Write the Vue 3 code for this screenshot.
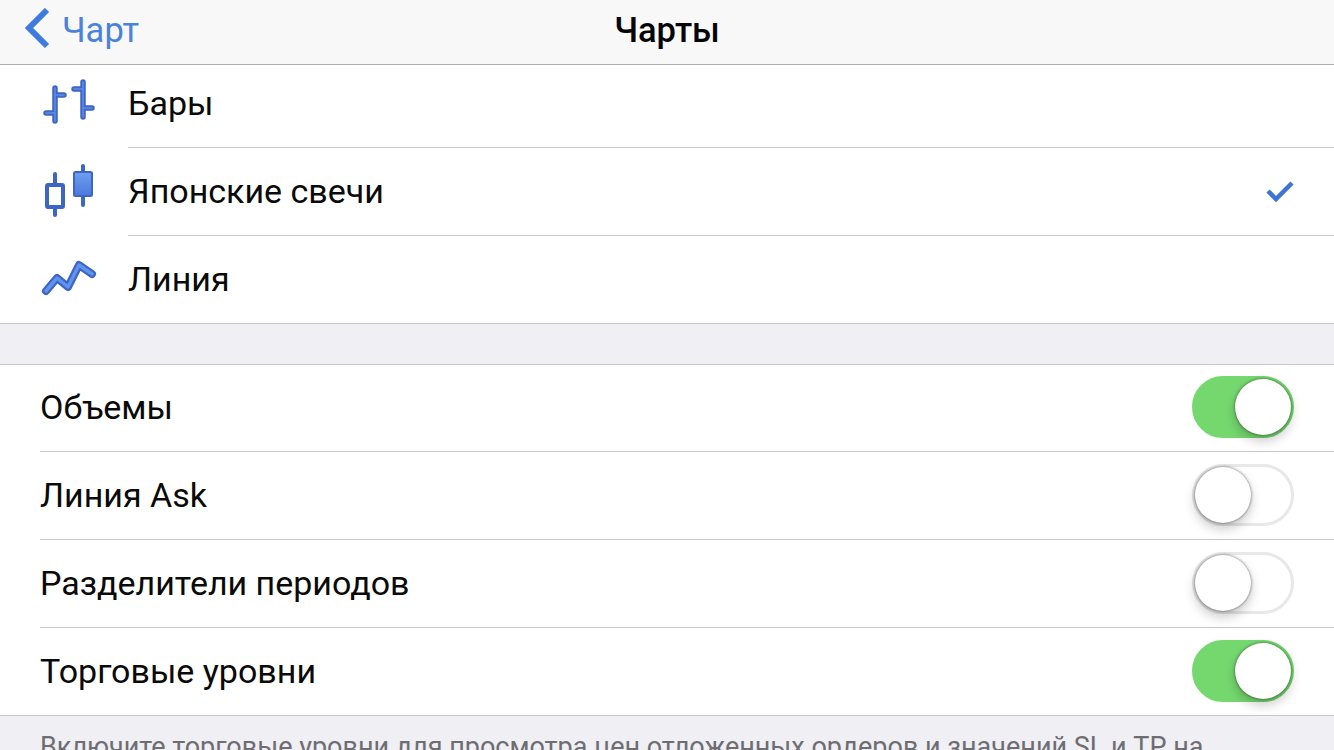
<script setup>
import { ref } from 'vue'

const chartTypes = ref([
  { id: 'bars', label: 'Бары', selected: false },
  { id: 'candles', label: 'Японские свечи', selected: true },
  { id: 'line', label: 'Линия', selected: false }
])

const options = ref([
  { label: 'Объемы', on: true },
  { label: 'Линия Ask', on: false },
  { label: 'Разделители периодов', on: false },
  { label: 'Торговые уровни', on: true }
])
</script>

<template>
  <div class="screen">
    <header class="navbar">
      <div class="back">
        <svg class="chevron" width="28" height="44" viewBox="0 0 28 44">
          <path d="M25 2 L7 20 L25 38" fill="none" stroke="#3e7be0" stroke-width="6" />
        </svg>
        <span>Чарт</span>
      </div>
      <div class="title">Чарты</div>
    </header>

    <!-- list is scrolled a little under the navbar -->
    <section class="group types">
      <div v-for="item in chartTypes" :key="item.id" class="type-row">
        <div class="type-icon">
          <svg v-if="item.id === 'bars'" width="60" height="60" viewBox="0 0 60 60">
            <g fill="none" stroke-linecap="round">
              <path stroke="#3f66c4" stroke-width="5.500" d="M15 14 V47 M15 21 H24 M6 39 H15 M43 8 V43 M34 15 H43 M43 34 H52" />
              <path stroke="#5f8dea" stroke-width="1.500" d="M15 14 V47 M15 21 H24 M6 39 H15 M43 8 V43 M34 15 H43 M43 34 H52" />
            </g>
          </svg>
          <svg v-else-if="item.id === 'candles'" width="60" height="60" viewBox="0 0 60 60">
            <defs>
              <linearGradient id="candleFill" x1="0" y1="0" x2="0" y2="1">
                <stop offset="0" stop-color="#6f9ff0" />
                <stop offset="1" stop-color="#4a78dc" />
              </linearGradient>
            </defs>
            <path d="M15 12 V53" stroke="#3d66c4" stroke-width="4" stroke-linecap="round" />
            <rect x="7" y="23" width="16" height="22" rx="1" fill="#fff" stroke="#3d66c4" stroke-width="4" />
            <path d="M43 4 V43" stroke="#3d66c4" stroke-width="4" stroke-linecap="round" />
            <rect x="34" y="10" width="18" height="24" rx="1.500" fill="url(#candleFill)" stroke="#3d66c4" stroke-width="2" />
          </svg>
          <svg v-else width="60" height="60" viewBox="0 0 60 60">
            <path d="M6 41 L17 28 L28 37 L39 15 L52 24" fill="none" stroke="#3d66c4" stroke-width="8" stroke-linejoin="round" stroke-linecap="round" />
            <path d="M6 41 L17 28 L28 37 L39 15 L52 24" fill="none" stroke="#5f93ee" stroke-width="3.500" stroke-linejoin="round" stroke-linecap="round" />
          </svg>
        </div>
        <div class="type-body">
          <span>{{ item.label }}</span>
          <svg v-if="item.selected" class="check" width="28" height="24" viewBox="0 0 28 24">
            <path d="M2 12 L10 20 L26 4" fill="none" stroke="#3e74d8" stroke-width="4.500" />
          </svg>
        </div>
      </div>
    </section>

    <div class="spacer"></div>

    <section class="group options">
      <div v-for="opt in options" :key="opt.label" class="opt-row">
        <span>{{ opt.label }}</span>
        <div class="switch" :class="{ on: opt.on }">
          <div class="knob"></div>
        </div>
      </div>
    </section>

    <p class="footnote">Включите торговые уровни для просмотра цен отложенных ордеров и значений SL и TP на</p>
  </div>
</template>

<style scoped>
.screen {
  width: 1334px;
  height: 750px;
  overflow: hidden;
  background: #efeff4;
  font-family: Roboto, "Noto Sans", sans-serif;
  color: #0a0a0a;
}

.navbar {
  height: 65px;
  box-sizing: border-box;
  background: #f8f8f8;
  border-bottom: 1px solid #aeaeb0;
  display: grid;
  grid-template-columns: 1fr auto 1fr;
  align-items: center;
  padding: 0 22px 4px;
}

.back {
  display: flex;
  align-items: center;
  gap: 12px;
  color: #4a82dc;
  font-size: 34.500px;
}

.title {
  font-size: 34.500px;
  font-weight: 500;
  color: #050505;
}

.group {
  background: #fff;
}

.types {
  overflow: hidden;
}

.type-row {
  height: 88px;
  display: flex;
}

.type-row:first-child {
  margin-top: -5px;
}

.type-icon {
  width: 128px;
  padding-left: 40px;
  box-sizing: border-box;
  display: flex;
  align-items: center;
}

.type-icon svg {
  display: block;
}

.type-body {
  flex: 1;
  display: flex;
  align-items: center;
  justify-content: space-between;
  padding: 0 40px 2px 0;
  font-size: 34px;
  box-sizing: border-box;
  border-bottom: 1px solid #c8c8cc;
}

.type-row:last-child {
  border-bottom: 1px solid #c8c8cc;
  box-sizing: border-box;
}

.type-row:last-child .type-body {
  border-bottom: none;
}

.spacer {
  height: 41px;
  box-sizing: border-box;
  border-bottom: 1px solid #c8c8cc;
}

.options {
  padding-left: 40px;
  border-bottom: 1px solid #c8c8cc;
}

.opt-row {
  height: 88px;
  box-sizing: border-box;
  display: flex;
  align-items: center;
  justify-content: space-between;
  padding: 0 40px 2px 0;
  font-size: 34px;
  border-bottom: 1px solid #c8c8cc;
}

.opt-row:first-child {
  height: 87px;
}

.opt-row:last-child {
  height: 87px;
  border-bottom: none;
}

.switch {
  width: 102px;
  height: 62px;
  box-sizing: border-box;
  border-radius: 31px;
  border: 3px solid #e8e8e8;
  background: #fff;
  position: relative;
}

.switch.on {
  background: #75d86f;
  border-color: #75d86f;
}

.knob {
  position: absolute;
  left: 0;
  top: 0;
  width: 56px;
  height: 56px;
  border-radius: 50%;
  background: #fff;
  box-shadow: 0 6px 12px rgba(0, 0, 0, 0.22), 0 0 3px rgba(0, 0, 0, 0.55);
}

.switch.on .knob {
  left: 40px;
}

.footnote {
  margin: 0;
  padding: 15px 40px 0;
  font-size: 27px;
  line-height: 32px;
  color: #6d6d72;
  white-space: nowrap;
}
</style>
